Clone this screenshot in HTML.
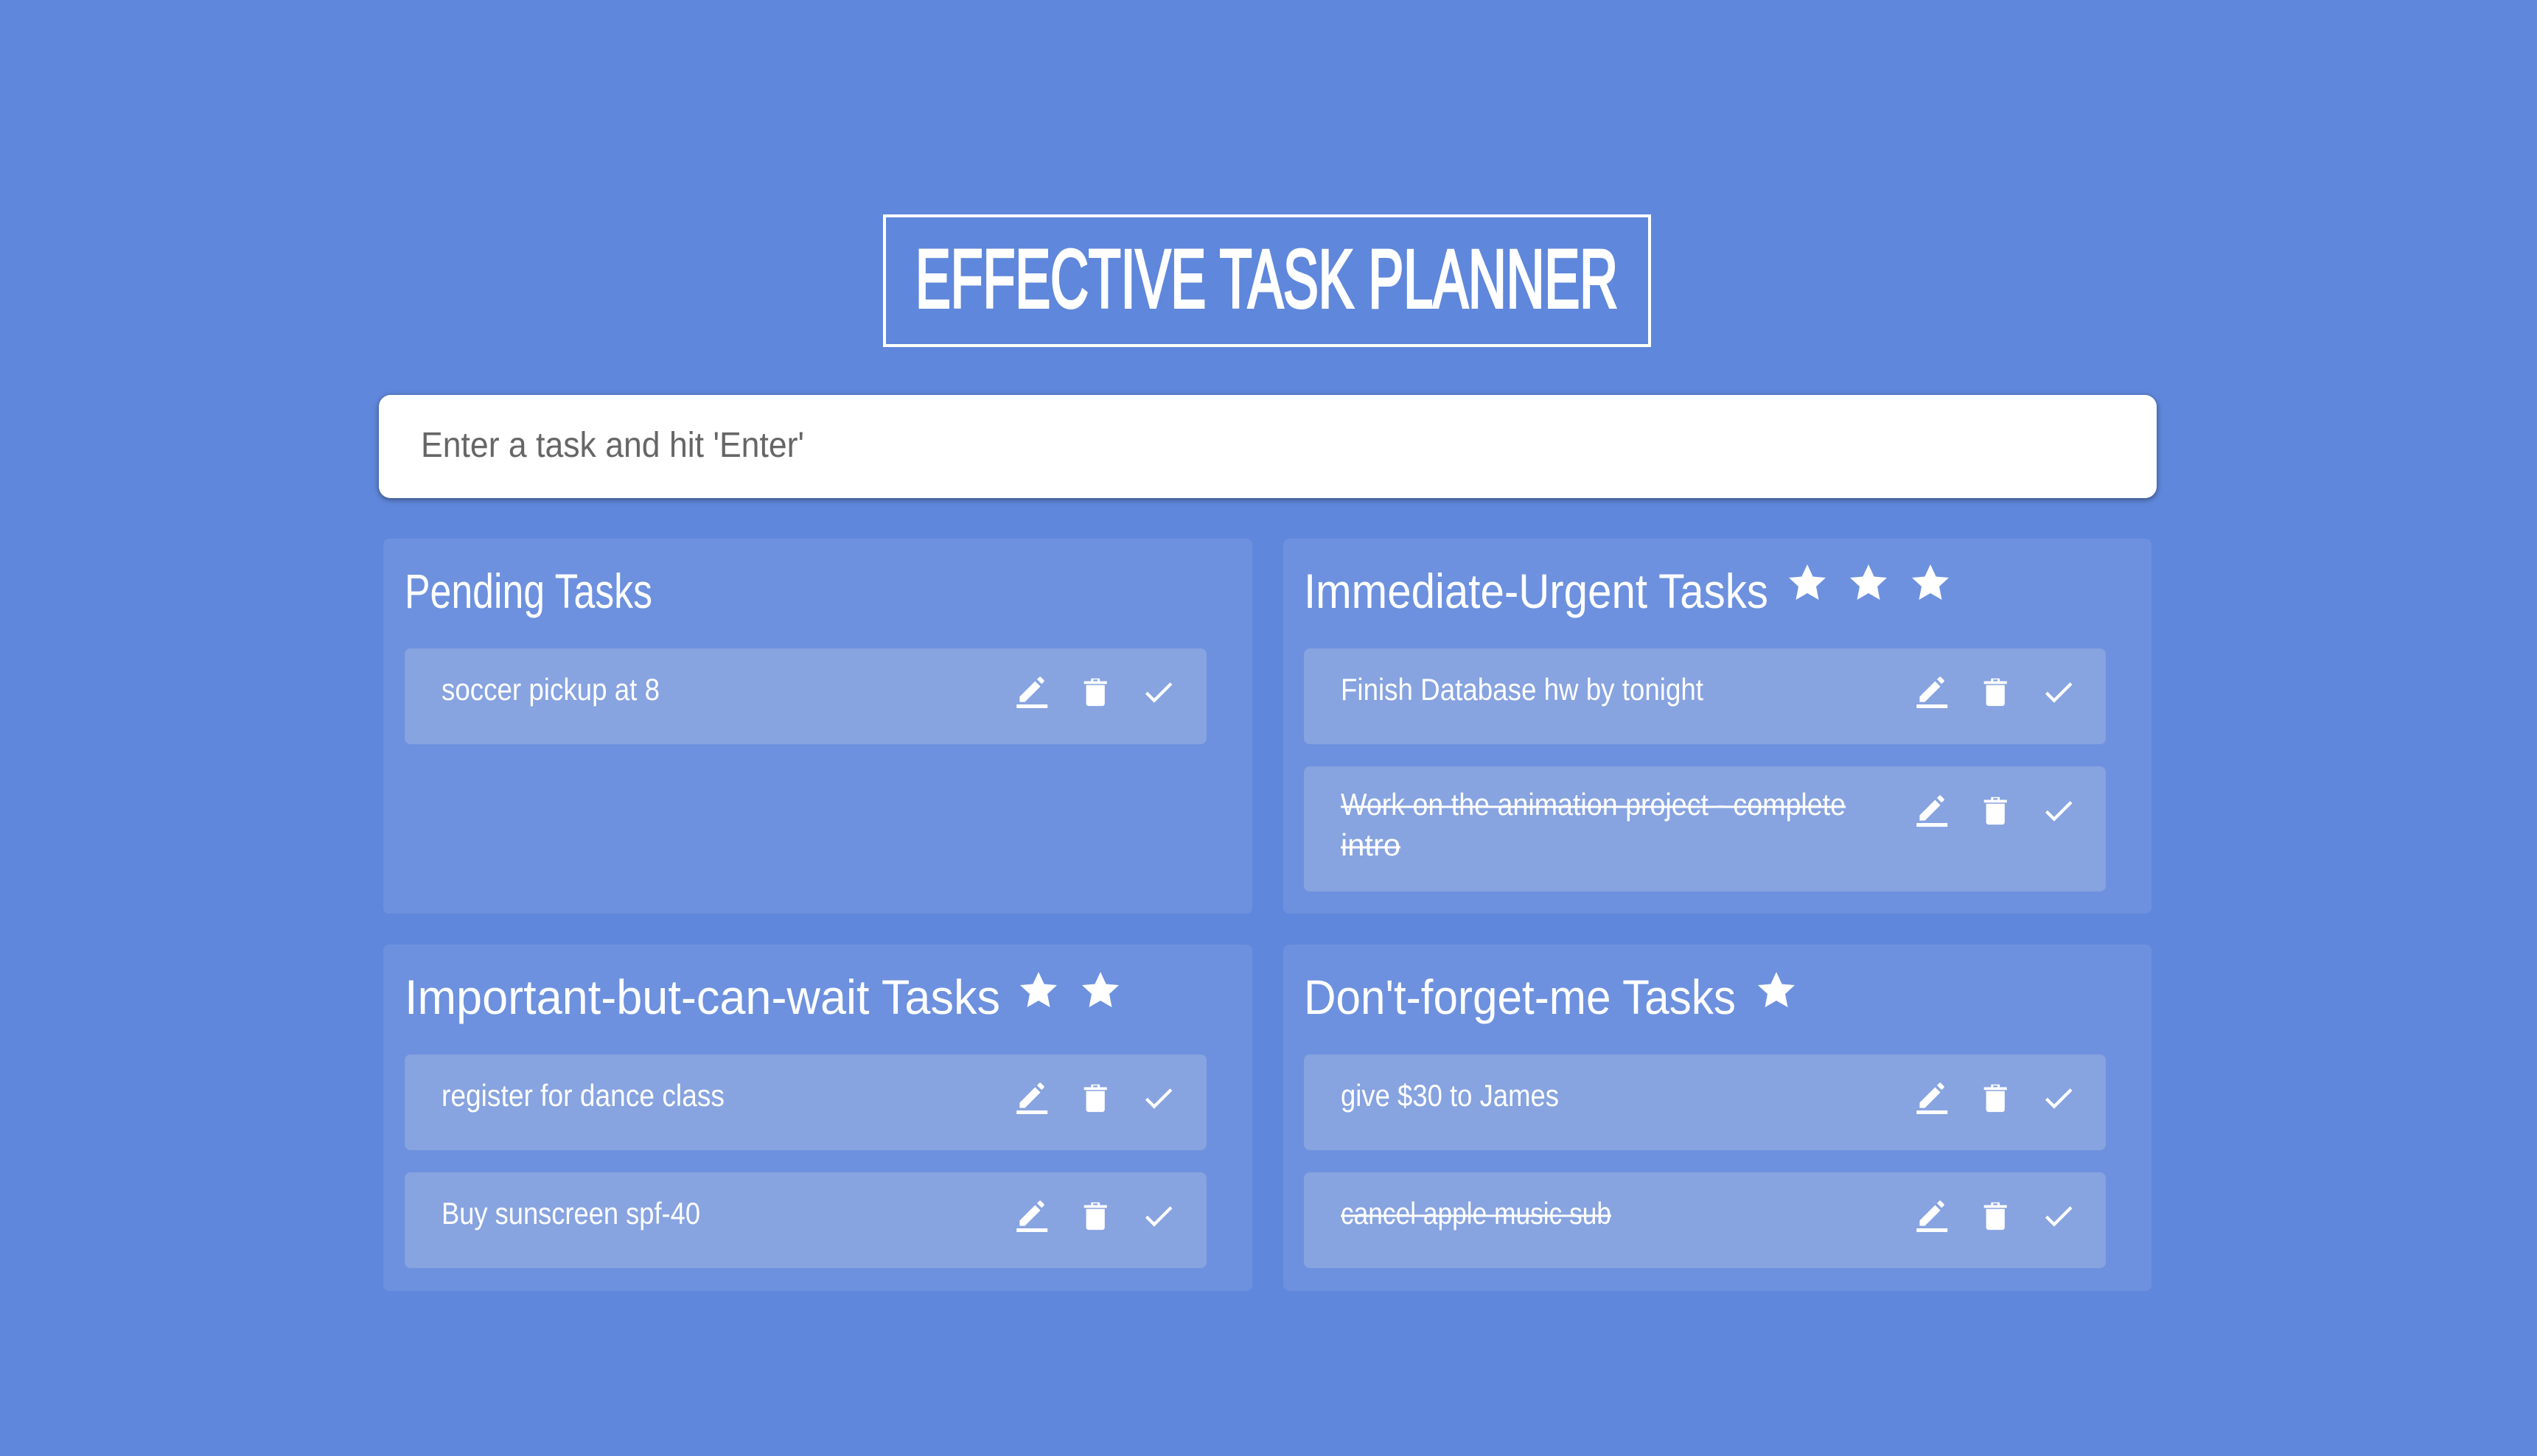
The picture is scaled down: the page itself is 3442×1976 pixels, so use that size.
<!DOCTYPE html>
<html><head><meta charset="utf-8"><style>
html,body{margin:0;padding:0;width:3442px;height:1976px;overflow:hidden;background:#5f87db}
svg{display:block}
text{font-family:"Liberation Sans",sans-serif}
</style></head><body>
<svg width="3442" height="1976" viewBox="0 0 3442 1976" xmlns="http://www.w3.org/2000/svg">
<defs>
<filter id="sh" x="-5%" y="-20%" width="110%" height="140%"><feDropShadow dx="0" dy="2" stdDeviation="4" flood-color="#000" flood-opacity="0.45"/></filter>
<g id="pen"><rect x="2" y="20" width="20" height="2.4" fill="#fff"/><path d="M4 18.4 L4 15 L14 5 L17.4 8.4 L7.4 18.4 Z M15.2 3.8 L16.6 2.4 Q17.2 1.8 17.8 2.4 L19.6 4.2 Q20.2 4.8 19.6 5.4 L18.2 6.8 Z" fill="#fff"/></g>
<g id="trash"><path d="M6 7.5h12v12a1.5 1.5 0 0 1-1.5 1.5h-9A1.5 1.5 0 0 1 6 19.5z M4.6 5h4.6V3.2h5.6V5h4.6v1.8H4.6z" fill="#fff"/><rect x="10.6" y="3.9" width="2.8" height="1.1" fill="#87a3e0"/></g>
<g id="chk"><polyline points="4,12.5 9,17.5 20,6.5" fill="none" stroke="#fff" stroke-width="2"/></g>
<path id="star" d="M0 -26 L7.6 -9.5 L25 -8 L12 4 L15.5 22 L0 13 L-15.5 22 L-12 4 L-25 -8 L-7.6 -9.5 Z" fill="#fff"/>
</defs>
<rect width="3442" height="1976" fill="#5f87db"/>
<rect x="1200" y="293" width="1038" height="176" fill="none" stroke="#fff" stroke-width="4"/>
<text x="1242" y="417" font-size="112" fill="#fff" stroke="#fff" stroke-width="4" textLength="953" lengthAdjust="spacingAndGlyphs">EFFECTIVE TASK PLANNER</text>
<rect x="514" y="536" width="2412" height="140" rx="16" fill="#fff" filter="url(#sh)"/>
<text x="571" y="620" font-size="48" fill="#666" textLength="520" lengthAdjust="spacingAndGlyphs">Enter a task and hit 'Enter'</text>
<g fill="#6d91de">
<rect x="520" y="731" width="1179" height="509" rx="8"/>
<rect x="1741" y="731" width="1178" height="509" rx="8"/>
<rect x="520" y="1282" width="1179" height="470" rx="8"/>
<rect x="1741" y="1282" width="1178" height="470" rx="8"/>
</g>
<g fill="#fff" font-size="66">
<text x="549" y="825" textLength="336" lengthAdjust="spacingAndGlyphs">Pending Tasks</text>
<text x="1769" y="825" textLength="630" lengthAdjust="spacingAndGlyphs">Immediate-Urgent Tasks</text>
<text x="549" y="1376" textLength="808" lengthAdjust="spacingAndGlyphs">Important-but-can-wait Tasks</text>
<text x="1769" y="1376" textLength="586" lengthAdjust="spacingAndGlyphs">Don't-forget-me Tasks</text>
</g>
<use href="#star" x="2452" y="792"/><use href="#star" x="2535" y="792"/><use href="#star" x="2619" y="792"/>
<use href="#star" x="1409" y="1345"/><use href="#star" x="1493" y="1345"/>
<use href="#star" x="2410" y="1345"/>
<g fill="#87a3e0">
<rect x="549" y="880" width="1088" height="130" rx="8"/>
<rect x="1769" y="880" width="1088" height="130" rx="8"/>
<rect x="1769" y="1040" width="1088" height="170" rx="8"/>
<rect x="549" y="1431" width="1088" height="130" rx="8"/>
<rect x="549" y="1591" width="1088" height="130" rx="8"/>
<rect x="1769" y="1431" width="1088" height="130" rx="8"/>
<rect x="1769" y="1591" width="1088" height="130" rx="8"/>
</g>
<g fill="#fff" font-size="42">
<text x="599" y="950" textLength="296" lengthAdjust="spacingAndGlyphs">soccer pickup at 8</text>
<text x="1819" y="950" textLength="492" lengthAdjust="spacingAndGlyphs">Finish Database hw by tonight</text>
<text x="1819" y="1106" textLength="685" lengthAdjust="spacingAndGlyphs">Work on the animation project - complete</text>
<text x="1819" y="1161" textLength="81" lengthAdjust="spacingAndGlyphs">intro</text>
<text x="599" y="1501" textLength="384" lengthAdjust="spacingAndGlyphs">register for dance class</text>
<text x="599" y="1661" textLength="351" lengthAdjust="spacingAndGlyphs">Buy sunscreen spf-40</text>
<text x="1819" y="1501" textLength="296" lengthAdjust="spacingAndGlyphs">give $30 to James</text>
<text x="1819" y="1661" textLength="367" lengthAdjust="spacingAndGlyphs">cancel apple music sub</text>
</g>
<g stroke="#fff" stroke-width="3">
<line x1="1819" y1="1095" x2="2504" y2="1095"/>
<line x1="1819" y1="1150" x2="1900" y2="1150"/>
<line x1="1819" y1="1650" x2="2186" y2="1650"/>
</g>
<g transform="translate(1375,914) scale(2.1)"><use href="#pen"/></g>
<g transform="translate(1461,914) scale(2.1)"><use href="#trash"/></g>
<g transform="translate(1547,914) scale(2.1)"><use href="#chk"/></g>

<g transform="translate(2596,914) scale(2.1)"><use href="#pen"/></g>
<g transform="translate(2682,914) scale(2.1)"><use href="#trash"/></g>
<g transform="translate(2768,914) scale(2.1)"><use href="#chk"/></g>

<g transform="translate(2596,1075) scale(2.1)"><use href="#pen"/></g>
<g transform="translate(2682,1075) scale(2.1)"><use href="#trash"/></g>
<g transform="translate(2768,1075) scale(2.1)"><use href="#chk"/></g>

<g transform="translate(1375,1465) scale(2.1)"><use href="#pen"/></g>
<g transform="translate(1461,1465) scale(2.1)"><use href="#trash"/></g>
<g transform="translate(1547,1465) scale(2.1)"><use href="#chk"/></g>

<g transform="translate(1375,1625) scale(2.1)"><use href="#pen"/></g>
<g transform="translate(1461,1625) scale(2.1)"><use href="#trash"/></g>
<g transform="translate(1547,1625) scale(2.1)"><use href="#chk"/></g>

<g transform="translate(2596,1465) scale(2.1)"><use href="#pen"/></g>
<g transform="translate(2682,1465) scale(2.1)"><use href="#trash"/></g>
<g transform="translate(2768,1465) scale(2.1)"><use href="#chk"/></g>

<g transform="translate(2596,1625) scale(2.1)"><use href="#pen"/></g>
<g transform="translate(2682,1625) scale(2.1)"><use href="#trash"/></g>
<g transform="translate(2768,1625) scale(2.1)"><use href="#chk"/></g>
</svg>
</body></html>
